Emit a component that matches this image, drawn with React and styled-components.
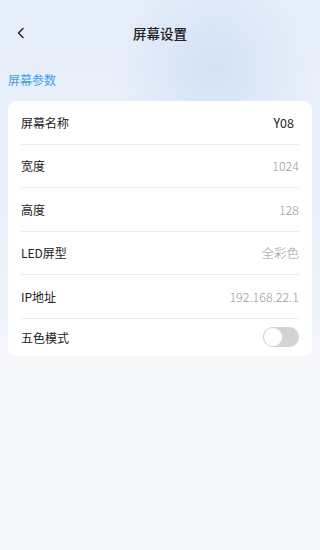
import React, { useState } from 'react';
import styled, { createGlobalStyle } from 'styled-components';

const GlobalStyle = createGlobalStyle`
    html, body {
        margin: 0;
        padding: 0;
        background: #f6f7f9;
    }
    body {
        font-family: "Noto Sans CJK SC", "Noto Sans", sans-serif;
    }
`

const Page = styled.div`
    width: 100%;
    min-height: 550px;
    overflow: hidden;
    background:
        radial-gradient(ellipse 100px 110px at 214px 68px, rgba(208, 223, 246, 0.85), rgba(208, 223, 246, 0) 100%),
        linear-gradient(180deg, #e6eef9 0px, #e9f0fa 200px, #f0f4fa 320px, #f6f7f9 362px);
`

const Header = styled.div`
    height: 68px;
    display: grid;
    grid-template-columns: 40px 1fr 40px;
    align-items: center;
`

const BackButton = styled.button`
    border: 0;
    background: none;
    padding: 0 0 0 16px;
    display: flex;
    align-items: center;
    height: 20px;
    margin-top: -2px;
    cursor: pointer;
`

const Title = styled.h1`
    margin: 0 0 2px 0;
    text-align: center;
    font-size: 13.5px;
    font-weight: 500;
    color: #222;
`

const SectionLabel = styled.div`
    padding: 3px 0 0 8px;
    height: 33px;
    font-size: 12px;
    color: #3d9cec;
    box-sizing: border-box;
`

const Card = styled.div`
    margin: 0 8px;
    background: #fff;
    border-radius: 8px;
    padding: 0 13px;
`

const Row = styled.div`
    height: ${p => (p.last ? '37px' : '42.5px')};
    display: flex;
    align-items: center;
    justify-content: space-between;
    border-bottom: ${p => (p.last ? 'none' : '1px solid #ececec')};
`

const Label = styled.span`
    font-size: 12px;
    color: #222;
`

const Value = styled.span`
    font-size: 12.5px;
    font-weight: ${p => (p.strong ? 400 : 300)};
    color: ${p => (p.strong ? '#222' : '#999')};
    margin-right: ${p => (p.strong ? '5px' : '0')};
`

const Switch = styled.button`
    position: relative;
    width: 36px;
    height: 20px;
    border: 0;
    padding: 0;
    border-radius: 10px;
    background: ${p => (p.on ? '#3d9cec' : '#d3d3d3')};
    cursor: pointer;
    &::after {
        content: '';
        position: absolute;
        top: 0;
        left: ${p => (p.on ? '16px' : '0')};
        width: 20px;
        height: 20px;
        box-sizing: border-box;
        border-radius: 50%;
        background: #fff;
        border: 1px solid #d6d6d6;
    }
`

const ChevronLeft = () => (
    <svg width="10" height="12" viewBox="0 0 10 12">
        <path d="M7 1.5 L2.5 6 L7 10.5" fill="none" stroke="#222" strokeWidth="1.5" strokeLinecap="round" strokeLinejoin="round" />
    </svg>
)

const rows = [
    { label: '屏幕名称', value: 'Y08', strong: true },
    { label: '宽度', value: '1024' },
    { label: '高度', value: '128' },
    { label: 'LED屏型', value: '全彩色' },
    { label: 'IP地址', value: '192.168.22.1' },
]

export default function App() {
    const [fiveColor, setFiveColor] = useState(false)
    return (
        <Page>
            <GlobalStyle />
            <Header>
                <BackButton aria-label="返回"><ChevronLeft /></BackButton>
                <Title>屏幕设置</Title>
                <span />
            </Header>
            <SectionLabel>屏幕参数</SectionLabel>
            <Card>
                {rows.map(r => (
                    <Row key={r.label}>
                        <Label>{r.label}</Label>
                        <Value strong={r.strong}>{r.value}</Value>
                    </Row>
                ))}
                <Row last>
                    <Label>五色模式</Label>
                    <Switch on={fiveColor} onClick={() => setFiveColor(!fiveColor)} />
                </Row>
            </Card>
        </Page>
    )
}
